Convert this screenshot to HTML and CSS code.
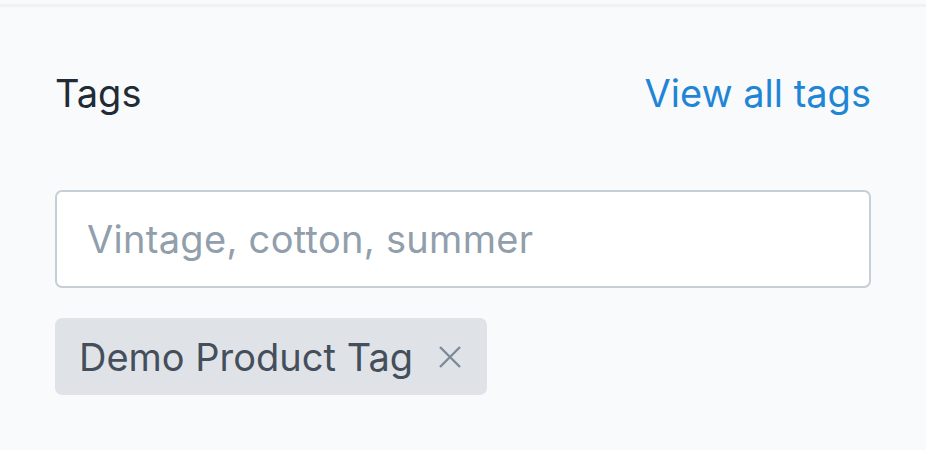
FILE: index.html
```html
<!DOCTYPE html>
<html>
<head>
<meta charset="utf-8">
<link rel="stylesheet" href="styles.css">
</head>
<body>
<div class="divider"></div>
<section class="card">
  <div class="header">
    <h2 class="title">Tags</h2>
    <a class="link" href="#">View all tags</a>
  </div>
  <div class="input">Vintage, cotton, summer</div>
  <div class="tags">
    <span class="tag">Demo Product Tag
      <svg class="x" viewBox="0 0 24 24" width="24" height="24"><path d="M2 2L22 22M22 2L2 22" stroke="currentColor" stroke-width="2.4" fill="none"/></svg>
    </span>
  </div>
</section>
</body>
</html>
```
FILE: styles.css
```css
html, body {
  margin: 0;
  padding: 0;
  background: #f9fafb;
  font-family: Inter, "Noto Sans", sans-serif;
  width: 926px;
  height: 450px;
  overflow: hidden;
}
.divider {
  margin-top: 4px;
  height: 3px;
  background: #eff1f3;
}
.card {
  padding: 0 55px;
}
.header {
  display: flex;
  justify-content: space-between;
  align-items: baseline;
  margin-top: 63px;
  height: 56px;
}
.title {
  margin: 0;
  font-weight: 400;
  font-size: 38px;
  color: #212b36;
}
.link {
  font-size: 38px;
  color: #1f86d6;
  text-decoration: none;
}
.input {
  margin-top: 64px;
  height: 98px;
  box-sizing: border-box;
  border: 2px solid #c6ced6;
  border-radius: 7px;
  background: #fff;
  display: flex;
  align-items: center;
  padding-left: 30px;
  font-size: 38px;
  letter-spacing: 0.3px;
  color: #919eab;
}
.tags {
  margin-top: 30px;
  display: flex;
}
.tag {
  display: flex;
  align-items: center;
  gap: 25px;
  height: 77px;
  padding: 0 25px 0 24px;
  background: #dfe3e8;
  border-radius: 7px;
  font-size: 38px;
  color: #454f5b;
}
.x {
  color: #7d8a97;
}
```
